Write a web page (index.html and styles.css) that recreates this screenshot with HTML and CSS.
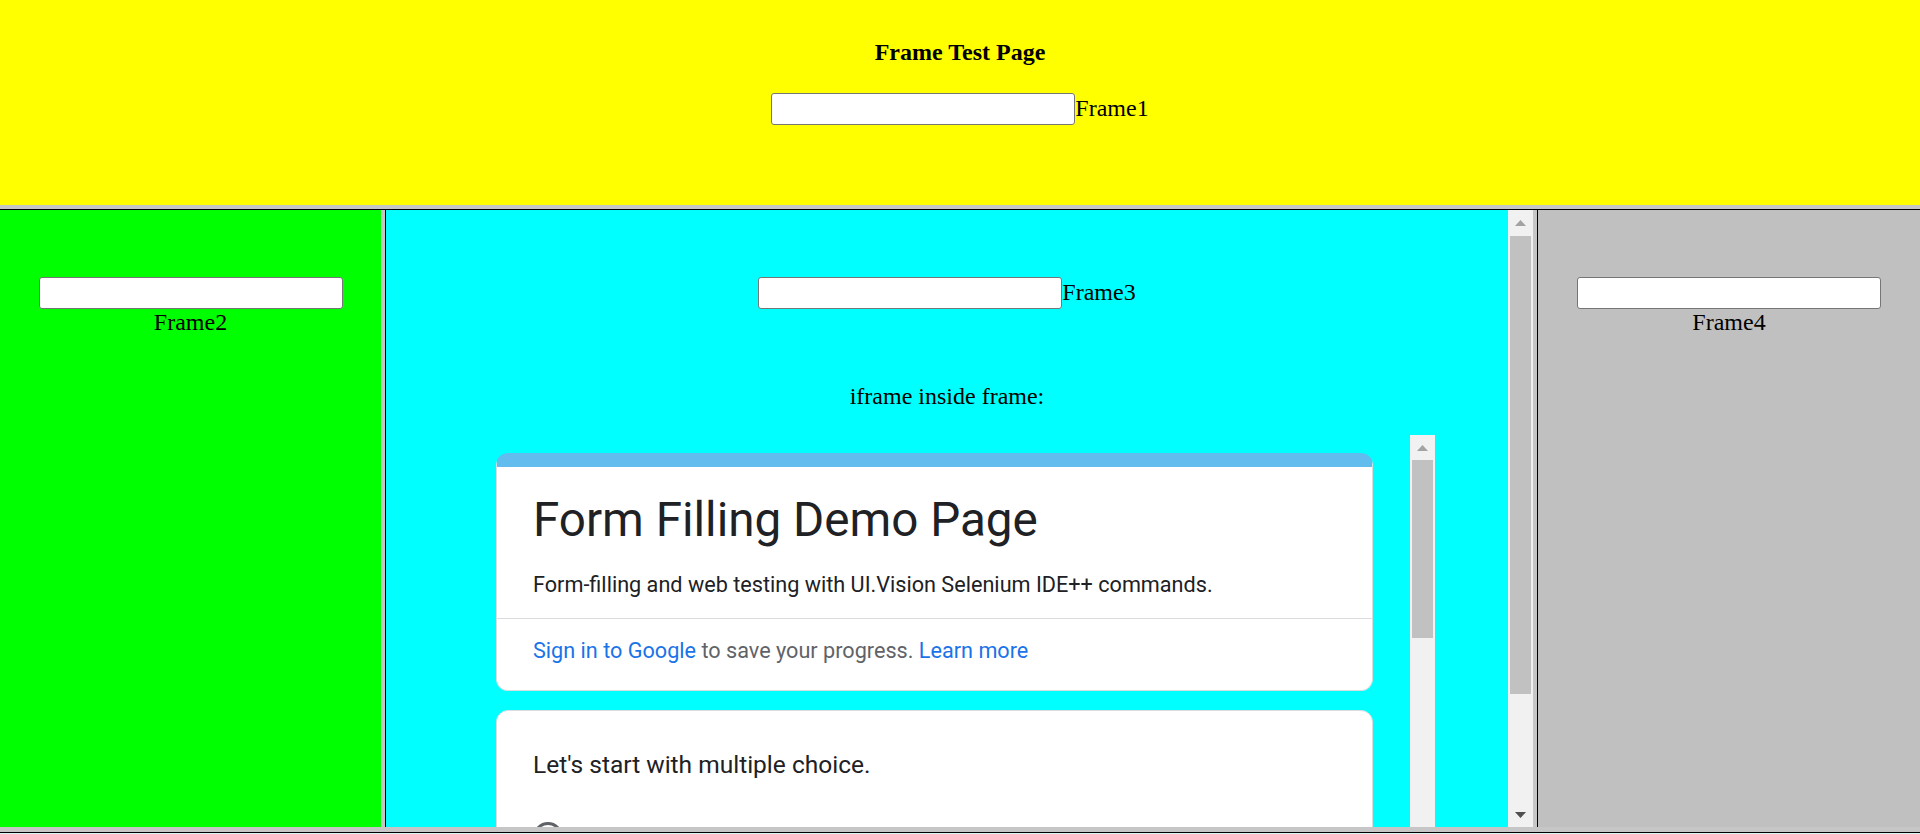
FILE: index.html
```html
<!DOCTYPE html>
<html>
<head>
<meta charset="utf-8">
<title>Frame Test Page</title>
<link rel="stylesheet" href="styles.css">
</head>
<body>
<div class="page">
  <div class="frame-top">
    <h3 class="page-title">Frame Test Page</h3>
    <div class="field-row"><input class="field" type="text"><span class="lbl lbl-inline">Frame1</span></div>
  </div>
  <div class="hsep"></div>
  <div class="middle">
    <div class="frame-side frame-green">
      <div class="field-stack"><input class="field" type="text"><span class="lbl lbl-below">Frame2</span></div>
    </div>
    <div class="vsep"></div>
    <div class="frame3">
      <div class="f3-body">
        <div class="field-row"><input class="field" type="text"><span class="lbl lbl-inline">Frame3</span></div>
        <p class="caption">iframe inside frame:</p>
        <div class="iframe">
          <div class="iframe-doc">
            <div class="card card-head">
              <div class="head-main">
                <div class="form-title">Form Filling Demo Page</div>
                <div class="form-desc">Form-filling and web testing with UI.Vision Selenium IDE++ commands.</div>
              </div>
              <div class="head-foot"><span class="link">Sign in to Google</span> to save your progress. <span class="link">Learn more</span></div>
            </div>
            <div class="card card-q">
              <div class="q-text">Let's start with multiple choice.</div>
              <div class="radio"></div>
            </div>
          </div>
          <div class="sb sb-inner">
            <div class="sb-btn"><svg width="11" height="6" viewBox="0 0 11 6"><path d="M5.5 0 L11 6 H0 Z" fill="#a3a3a3"/></svg></div>
            <div class="sb-thumb thumb-inner"></div>
          </div>
        </div>
      </div>
      <div class="sb sb-outer">
        <div class="sb-btn"><svg width="11" height="6" viewBox="0 0 11 6"><path d="M5.5 0 L11 6 H0 Z" fill="#a3a3a3"/></svg></div>
        <div class="sb-thumb thumb-outer"></div>
        <div class="sb-space"></div>
        <div class="sb-btn"><svg width="11" height="6" viewBox="0 0 11 6"><path d="M0 0 H11 L5.5 6 Z" fill="#505050"/></svg></div>
      </div>
    </div>
    <div class="vsep"></div>
    <div class="frame-side frame-gray">
      <div class="field-stack"><input class="field" type="text"><span class="lbl lbl-below">Frame4</span></div>
    </div>
  </div>
  <div class="hsep hsep-bottom"></div>
  <div class="frame-bottom"></div>
</div>
</body>
</html>
```

FILE: styles.css
```css
html, body {
  margin: 0;
  padding: 0;
}
body {
  width: 1920px;
  height: 834px;
  overflow: hidden;
  font-family: "Liberation Serif", "Times New Roman", serif;
  color: #000;
}
.page {
  display: flex;
  flex-direction: column;
  height: 834px;
}
.frame-top {
  height: 205px;
  flex: none;
  background: #ffff00;
  box-sizing: border-box;
  padding-top: 40px;
  text-align: center;
}
.page-title {
  margin: 0;
  font-size: 24px;
  line-height: 24px;
  font-weight: bold;
}
.frame-top .field-row {
  margin-top: 29px;
}
.field-row {
  display: flex;
  justify-content: center;
  align-items: flex-start;
}
.field-stack {
  display: flex;
  flex-direction: column;
  align-items: center;
}
.field {
  box-sizing: border-box;
  width: 304px;
  height: 32px;
  margin: 0;
  padding: 0;
  border: 1px solid #767676;
  border-radius: 3px;
  background: #fff;
  font-size: 20px;
}
.lbl {
  font-size: 24px;
  line-height: 24px;
}
.lbl-inline {
  margin-top: 3px;
}
.lbl-below {
  margin-top: 1px;
}
.hsep {
  height: 4px;
  flex: none;
  background: #c6c6c6;
  border-bottom: 1px solid #000;
}
.hsep-bottom {
  height: 5px;
}
.frame-bottom {
  flex: 1;
  background: #d8f4f4;
}
.middle {
  height: 617px;
  flex: none;
  display: flex;
}
.frame-side {
  box-sizing: border-box;
  padding-top: 67px;
}
.frame-green {
  width: 381px;
  background: #00ff00;
}
.frame-gray {
  flex: 1;
  background: #c0c0c0;
}
.vsep {
  width: 4px;
  flex: none;
  background: #c6c6c6;
  border-right: 1px solid #000;
}
.frame3 {
  width: 1147px;
  flex: none;
  display: flex;
}
.f3-body {
  flex: 1;
  background: #00ffff;
  overflow: hidden;
  box-sizing: border-box;
  padding-top: 67px;
  text-align: center;
}
.caption {
  margin: 75px 0 0;
  font-size: 24px;
  line-height: 24px;
}
.iframe {
  width: 976px;
  height: 600px;
  margin: 27px auto 0;
  display: flex;
}
.iframe-doc {
  flex: 1;
  display: flex;
  flex-direction: column;
  align-items: center;
  gap: 19px;
  padding-top: 18px;
  font-family: Roboto, "Liberation Sans", sans-serif;
  text-align: left;
}
.card {
  width: 877px;
  box-sizing: border-box;
  background: #fff;
  border: 1px solid #dadce0;
  border-radius: 12px;
  flex: none;
}
.card-head {
  border-top: 14px solid #62bdee;
}
.head-main {
  padding: 25px 36px 18px;
  border-bottom: 1px solid #dadce0;
}
.form-title {
  font-size: 47.6px;
  line-height: 56px;
  color: #202124;
}
.form-desc {
  margin-top: 22px;
  font-size: 21.65px;
  line-height: 30px;
  color: #202124;
}
.head-foot {
  padding: 17px 36px 24px;
  font-size: 21.65px;
  line-height: 30px;
  color: #5f6368;
}
.link {
  color: #1a73e8;
}
.card-q {
  padding: 38px 36px 40px;
}
.q-text {
  font-size: 24.5px;
  line-height: 32px;
  color: #202124;
}
.radio {
  margin-top: 41px;
  width: 30px;
  height: 30px;
  box-sizing: border-box;
  border: 3px solid #5f6368;
  border-radius: 50%;
}
.sb {
  width: 25px;
  flex: none;
  background: #f1f1f1;
  display: flex;
  flex-direction: column;
}
.sb-btn {
  height: 25px;
  flex: none;
  display: flex;
  align-items: center;
  justify-content: center;
}
.sb-btn svg {
  display: block;
}
.sb-thumb {
  margin: 0 2px;
  background: #c1c1c1;
  flex: none;
}
.thumb-outer {
  margin-top: 1px;
  height: 458px;
}
.thumb-inner {
  height: 178px;
}
.sb-space {
  flex: 1;
}
```
